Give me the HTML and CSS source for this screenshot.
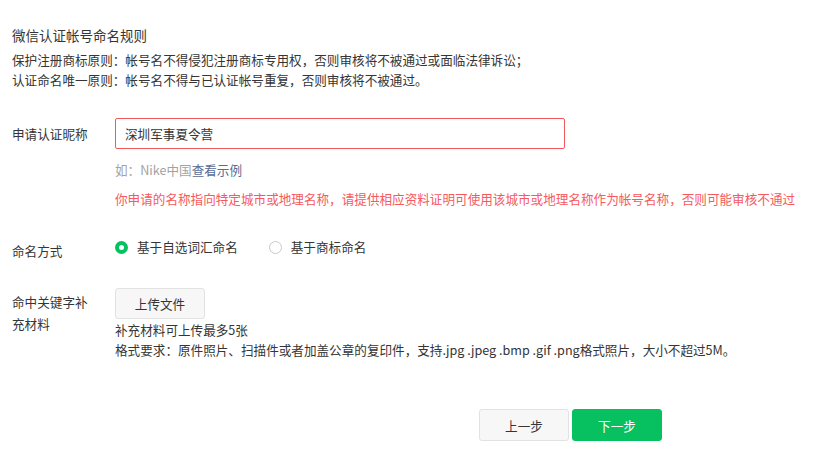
FILE: index.html
```html
<!DOCTYPE html>
<html lang="zh-CN">
<head>
<meta charset="utf-8">
<title>微信认证帐号命名</title>
<link rel="stylesheet" href="styles.css">
</head>
<body>
<div class="page">
  <section class="rules">
    <h2 class="rules-title">微信认证帐号命名规则</h2>
    <p class="rules-line">保护注册商标原则：帐号名不得侵犯注册商标专用权，否则审核将不被通过或面临法律诉讼；</p>
    <p class="rules-line">认证命名唯一原则：帐号名不得与已认证帐号重复，否则审核将不被通过。</p>
  </section>

  <div class="form">
    <div class="row row-name">
      <div class="label label-name">申请认证昵称</div>
      <div class="field">
        <div class="input input-error">深圳军事夏令营</div>
        <p class="hint">如：Nike中国<a class="link" href="#">查看示例</a></p>
        <p class="error">你申请的名称指向特定城市或地理名称，请提供相应资料证明可使用该城市或地理名称作为帐号名称，否则可能审核不通过</p>
      </div>
    </div>

    <div class="row row-type">
      <div class="label label-type">命名方式</div>
      <div class="field radios">
        <label class="radio">
          <span class="radio-dot checked"></span>
          <span class="radio-text">基于自选词汇命名</span>
        </label>
        <label class="radio">
          <span class="radio-dot"></span>
          <span class="radio-text">基于商标命名</span>
        </label>
      </div>
    </div>

    <div class="row row-upload">
      <div class="label label-upload">命中关键字补充材料</div>
      <div class="field">
        <button class="btn btn-default btn-upload" type="button">上传文件</button>
        <p class="tip">补充材料可上传最多5张</p>
        <p class="tip">格式要求：原件照片、扫描件或者加盖公章的复印件，支持.jpg .jpeg .bmp .gif .png格式照片，大小不超过5M。</p>
      </div>
    </div>
  </div>

  <div class="actions">
    <button class="btn btn-default btn-nav" type="button">上一步</button>
    <button class="btn btn-primary btn-nav" type="button">下一步</button>
  </div>
</div>
</body>
</html>
```
FILE: styles.css
```css
* {
  box-sizing: border-box;
}

html, body {
  margin: 0;
  padding: 0;
  background: #ffffff;
}

body {
  font-family: "Noto Sans CJK SC", "Noto Sans", sans-serif;
  font-size: 12.6px;
  line-height: 20px;
  color: #353535;
}

.page {
  padding: 25px 12px 0 12px;
}

.rules-title {
  margin: 0 0 5px 0;
  font-size: 13.5px;
  font-weight: normal;
  line-height: 20px;
  color: #353535;
}

.rules-line {
  margin: 0;
  line-height: 20px;
}

.row {
  display: flex;
}

.label {
  width: 103px;
  flex: none;
  color: #353535;
}

.field {
  flex: 1;
  min-width: 0;
}

.row-name {
  margin-top: 28px;
}

.label-name {
  line-height: 31px;
}

.input {
  width: 450px;
  height: 31px;
  border: 1px solid #e0e0e0;
  border-radius: 2px;
  padding: 0 9px;
  line-height: 29px;
  color: #353535;
}

.input-error {
  border-color: #f2575c;
}

.hint {
  margin: 11px 0 0 0;
  color: #a3a3a3;
}

.link {
  color: #576b95;
  text-decoration: none;
}

.error {
  margin: 9px 0 0 0;
  color: #f65a5e;
  white-space: nowrap;
}

.row-type {
  margin-top: 28px;
}

.label-type {
  padding-top: 4px;
}

.radios {
  display: flex;
  align-items: center;
  height: 20px;
}

.radio {
  display: flex;
  align-items: center;
  margin-right: 31px;
  cursor: pointer;
}

.radio-dot {
  width: 13px;
  height: 13px;
  border-radius: 50%;
  border: 1px solid #c8c8c8;
  background: #ffffff;
  margin-right: 9px;
  flex: none;
}

.radio-dot.checked {
  border: 4px solid #07c160;
  background: #ffffff;
}

.row-upload {
  margin-top: 27px;
}

.label-upload {
  padding-top: 3px;
  padding-right: 26px;
  line-height: 22px;
}

.btn {
  font-family: inherit;
  font-size: 12.6px;
  border-radius: 3px;
  cursor: pointer;
  padding: 0;
}

.btn-default {
  background: #f7f7f7;
  border: 1px solid #e2e2e2;
  color: #353535;
}

.btn-primary {
  background: #07c160;
  border: 1px solid #07c160;
  color: #ffffff;
}

.btn-upload {
  display: block;
  width: 90px;
  height: 31px;
}

.tip {
  margin: 1px 0 0 0;
  line-height: 20px;
}

.tip + .tip {
  margin-top: 0;
}

.actions {
  display: flex;
  gap: 3px;
  margin-top: 49px;
  padding-left: 467px;
}

.btn-nav {
  width: 90px;
  height: 32px;
}
```
